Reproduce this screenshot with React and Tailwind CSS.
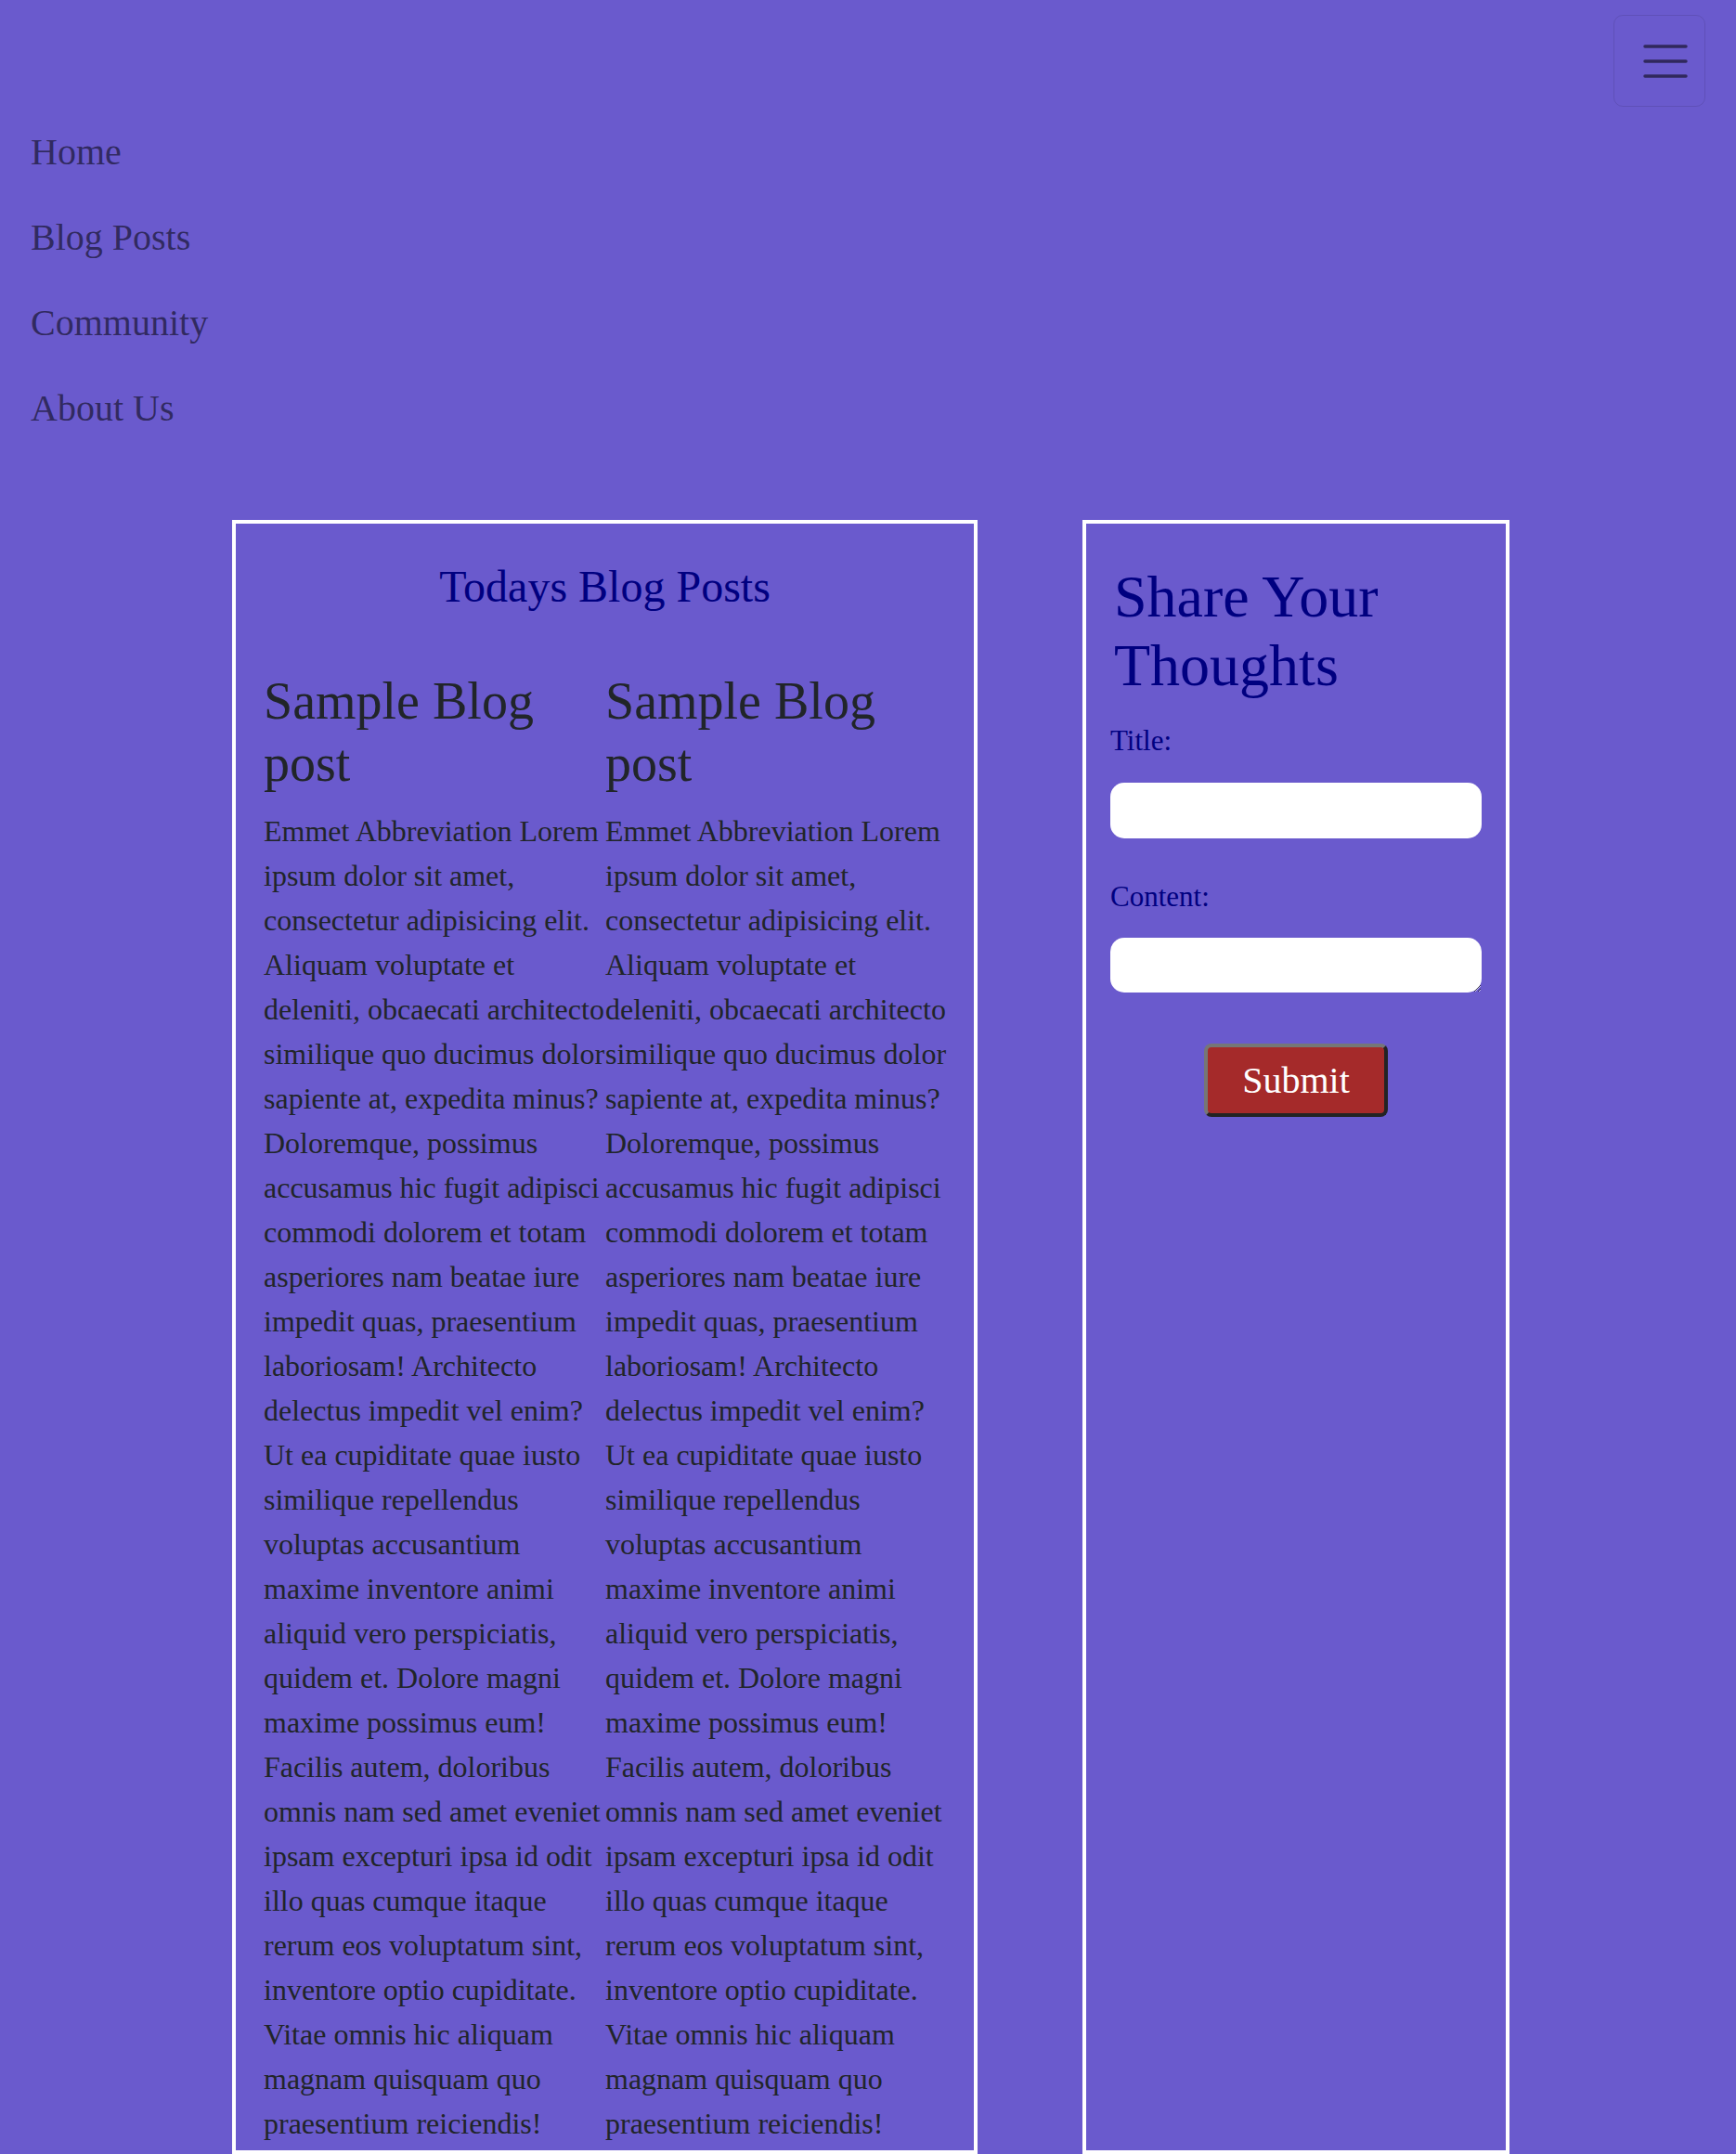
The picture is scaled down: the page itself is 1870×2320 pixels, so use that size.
import React from "react";

const navLinks = ["Home", "Blog Posts", "Community", "About Us"];

const loremText =
  "Emmet Abbreviation Lorem ipsum dolor sit amet, consectetur adipisicing elit. Aliquam voluptate et deleniti, obcaecati architecto similique quo ducimus dolor sapiente at, expedita minus? Doloremque, possimus accusamus hic fugit adipisci commodi dolorem et totam asperiores nam beatae iure impedit quas, praesentium laboriosam! Architecto delectus impedit vel enim? Ut ea cupiditate quae iusto similique repellendus voluptas accusantium maxime inventore animi aliquid vero perspiciatis, quidem et. Dolore magni maxime possimus eum! Facilis autem, doloribus omnis nam sed amet eveniet ipsam excepturi ipsa id odit illo quas cumque itaque rerum eos voluptatum sint, inventore optio cupiditate. Vitae omnis hic aliquam magnam quisquam quo praesentium reiciendis!";

function BlogPost() {
  return (
    <article>
      <h3 className="text-[56px] leading-[1.2] text-[#212529] mb-[15px]">
        Sample Blog post
      </h3>
      <p className="text-[32px] leading-[48px] text-[#212529]">{loremText}</p>
    </article>
  );
}

function App() {
  return (
    <div className="min-h-screen w-full bg-[#6a5acd] font-['Liberation_Serif',serif]">
      {/* navbar (collapsed menu shown open) */}
      <nav className="pt-4 px-[33px]">
        <div className="flex justify-end">
          <button className="w-[99px] h-[99px] border border-black/10 rounded-[10px] flex items-center justify-center">
            <svg width="48" height="36" viewBox="0 0 48 36" className="ml-[13px]">
              <g stroke="rgba(0,0,0,0.55)" strokeWidth="3.5" strokeLinecap="round">
                <line x1="2" y1="2" x2="46" y2="2" />
                <line x1="2" y1="18" x2="46" y2="18" />
                <line x1="2" y1="34" x2="46" y2="34" />
              </g>
            </svg>
          </button>
        </div>
        <ul className="flex flex-col mt-[3px]">
          {navLinks.map((link) => (
            <li key={link}>
              <a className="block py-4 text-[40px] leading-[60px] text-black/55">
                {link}
              </a>
            </li>
          ))}
        </ul>
      </nav>

      <main className="flex items-stretch ml-[250px] mt-[74px] gap-[113px]">
        <section className="w-[803px] border-4 border-white pt-[39px] pb-[5px]">
          <h2 className="text-center text-[48px] leading-[1.2] text-[#000080]">
            Todays Blog Posts
          </h2>
          <div className="grid grid-cols-[368px_368px] pl-[30px] mt-[61px]">
            <BlogPost />
            <BlogPost />
          </div>
        </section>

        <section className="w-[460px] border-4 border-white pt-[42px] px-[26px]">
          <h1 className="pl-[4px] text-[64px] leading-[74px] text-[#000080]">
            Share Your Thoughts
          </h1>
          <form className="flex flex-col mt-[21px]">
            <label className="text-[31px] leading-[46.5px] text-[#000080]">Title:</label>
            <input
              type="text"
              className="mt-[21px] w-[400px] h-[60px] rounded-[15px] bg-white outline-none"
            />
            <label className="mt-[40px] text-[31px] leading-[46.5px] text-[#000080]">
              Content:
            </label>
            <textarea className="mt-[21px] block w-[400px] h-[59px] rounded-[15px] bg-white outline-none" />
            <button
              type="button"
              className="mt-[55px] mx-auto w-[198px] h-[79px] rounded-[8px] bg-[#a52a2a] border-4 border-t-[#767676] border-l-[#767676] border-r-[#232323] border-b-[#232323] text-white text-[40px] leading-none"
            >
              Submit
            </button>
          </form>
        </section>
      </main>
    </div>
  );
}

export default App;
